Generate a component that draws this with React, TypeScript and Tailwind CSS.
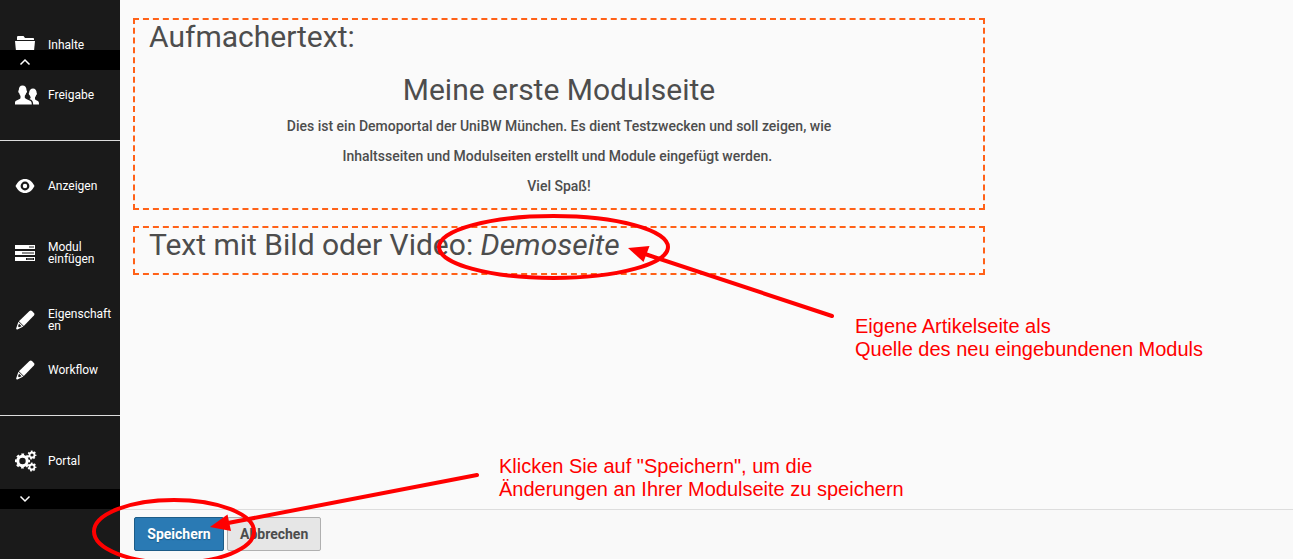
import type { ReactNode } from "react";

function FolderIcon() {
  return (
    <svg width="24" height="20" viewBox="0 0 24 20" fill="currentColor" aria-hidden="true">
      <path d="M2 5V2.2C2 1.4 2.6 1 3.2 1h5.3L10 3h8.2c.5 0 .8.3.8.8V5z" />
      <path d="M0 6h20l-1.2 12H1.2z" />
    </svg>
  );
}

function UsersIcon() {
  return (
    <svg width="24" height="20" viewBox="0 0 24 20" fill="currentColor" aria-hidden="true">
      <path d="M7.5.5c2.600 0 4 2 4 4.600 0 .6.7.7.5 1.700-.2.9-.6 1.100-.8 1.300-.3 1.300-1 2.200-1.400 2.700v1.700c0 .8.6 1 1.500 1.400l3.700 1.800c1.300.7 1.700 1.300 1.800 3.800H0v-2c.1-1.100.6-1.500 1.600-2l3-1.400c.7-.4.9-.7.9-1.600v-1.600c-.5-.6-1.100-1.500-1.400-2.800-.4-.2-.7-.5-.8-1.300-.1-.9.3-1.200.5-1.700 0-2.700 1.200-4.600 3.700-4.600z" />
      <path d="M18 3.500c2.200 0 3.600 1.700 3.600 4 0 .5.5.7.3 1.500-.1.600-.4.900-.7 1.100-.2 1-.7 1.800-1.200 2.300v1.500c0 .5.3.8.8 1l2 1c.9.500 1.200 1 1.200 3.600h-5.800c-.1-2.700-.7-3.900-2.100-4.700l-1.700-.8c.8-.4 1.200-.7 1.200-1.300v-.8c-.5-.5-.8-1.200-1-1.900-.4-.2-.7-.5-.8-1.100-.1-.7.2-1 .4-1.400 0-2.300 1.500-4 3.800-4z" />
    </svg>
  );
}

function EyeIcon() {
  return (
    <svg width="20" height="20" viewBox="0 0 20 20" aria-hidden="true">
      <path d="M.5 10C2.800 5.500 5.900 3 10 3s7.200 2.500 9.500 7c-2.300 4.500-5.400 7-9.500 7S2.800 14.500.5 10z" fill="currentColor" />
      <circle cx="10" cy="10" r="3.300" fill="currentColor" stroke="#1a1a1a" strokeWidth="2.200" />
    </svg>
  );
}

function ModuleIcon() {
  return (
    <svg width="20" height="18" viewBox="0 0 20 18" aria-hidden="true">
      <path d="M0 1h20v4H0zM0 7h20v4H0zM0 13h20v4H0z" fill="currentColor" />
      <path d="M14 2.500h5v1h-5zM7 8.500h12v1H7zM11 14h8v2h-8z" fill="#1a1a1a" />
      <path d="M15 3h3v1h-3zM12 14.500h6v1h-6z" fill="#888888" />
    </svg>
  );
}

function PencilIcon() {
  return (
    <svg width="20" height="20" viewBox="0 0 20 20" fill="currentColor" aria-hidden="true">
      <path d="M14.500 1c.9-.8 1.700-.7 2.500.1l1.900 2c.7.8.7 1.500 0 2.300L8.800 16.100 3.900 11.300z" />
      <path fillRule="evenodd" d="M3.400 11.700l5 4.900-6 2.800c-.9.300-1.500-.3-1.200-1.100zM4 13.800l-1 2.500 1 1 2.600-1.100z" />
    </svg>
  );
}

function CogsIcon() {
  return (
    <svg width="22" height="22" viewBox="0 0 22 22" fill="none" stroke="currentColor" aria-hidden="true">
      <circle cx="7.500" cy="11" r="4.700" strokeWidth="3" />
      <circle cx="7.500" cy="11" r="6.600" strokeWidth="2" strokeDasharray="2.700 2.484" strokeDashoffset="1.350" />
      <circle cx="17" cy="5" r="2.500" strokeWidth="1.800" />
      <circle cx="17" cy="5" r="3.700" strokeWidth="1.500" strokeDasharray="1.700 1.621" strokeDashoffset=".8" />
      <circle cx="17" cy="17" r="2.500" strokeWidth="1.800" />
      <circle cx="17" cy="17" r="3.700" strokeWidth="1.500" strokeDasharray="1.700 1.621" strokeDashoffset=".8" />
    </svg>
  );
}

function Chevron({ up = false }: { up?: boolean }) {
  return (
    <svg width="12" height="8" viewBox="0 0 12 8" fill="none" stroke="currentColor" strokeWidth="1.500" aria-hidden="true">
      <path d={up ? "M1.500 6.500 6 2l4.500 4.500" : "M1.500 1.500 6 6l4.500-4.500"} />
    </svg>
  );
}

function NavItem({ icon, children }: { icon: ReactNode; children: ReactNode }) {
  return (
    <a href="#" className="flex h-[50px] items-center pl-[15px] text-xs leading-3 text-white">
      <span className="w-[33px] shrink-0">{icon}</span>
      <span className="w-16">{children}</span>
    </a>
  );
}

function ScrollBar({ up = false }: { up?: boolean }) {
  return (
    <button
      type="button"
      aria-label={up ? "Nach oben" : "Nach unten"}
      className={`flex h-5 w-full shrink-0 items-center bg-black pl-[19px] text-white ${up ? "pt-1" : ""}`}
    >
      <Chevron up={up} />
    </button>
  );
}

function Sidebar() {
  return (
    <nav className="flex w-[120px] shrink-0 flex-col bg-[#1a1a1a]">
      <div className="h-[50px] overflow-hidden pt-5">
        <NavItem icon={<FolderIcon />}>Inhalte</NavItem>
      </div>
      <ScrollBar up />
      <div className="border-b border-[#dddddd] pb-5">
        <NavItem icon={<UsersIcon />}>Freigabe</NavItem>
      </div>
      <div className="border-b border-[#dddddd] py-5">
        <NavItem icon={<EyeIcon />}>Anzeigen</NavItem>
        <div className="py-[17px]">
          <NavItem icon={<ModuleIcon />}>Modul einfügen</NavItem>
        </div>
        <NavItem icon={<PencilIcon />}>
          <span className="break-all">Eigenschaften</span>
        </NavItem>
        <NavItem icon={<PencilIcon />}>Workflow</NavItem>
      </div>
      <div className="pt-5 pb-[3px]">
        <NavItem icon={<CogsIcon />}>Portal</NavItem>
      </div>
      <ScrollBar />
    </nav>
  );
}

function Module({ title, children }: { title: ReactNode; children?: ReactNode }) {
  return (
    <section className="max-w-[852px] border-2 border-dashed border-[#ff6118] px-[14px] pb-[7px]">
      <h2 className="pb-1 text-[30px] leading-[34px]">{title}</h2>
      {children}
    </section>
  );
}

function Annotations() {
  return (
    <div className="pointer-events-none absolute inset-0 overflow-hidden font-['Liberation_Sans',sans-serif] text-xl leading-[23px] text-[#ff0000]">
      <svg width="1293" height="559" viewBox="0 0 1293 559" className="max-w-none" aria-hidden="true">
        <g fill="none" stroke="currentColor" strokeWidth="4" strokeLinecap="round">
          <ellipse cx="553.500" cy="247" rx="114.500" ry="31" />
          <ellipse cx="174" cy="531.500" rx="80" ry="31.500" />
          <path d="M645 254 832 316" />
          <path d="M228 523 477 475" />
        </g>
        <g fill="currentColor">
          <path d="M628 248 649.500 246 643.500 262z" />
          <path d="M210 527 227.500 514.500 231 531z" />
        </g>
      </svg>
      <p className="absolute top-[315px] left-[855px] whitespace-nowrap">
        Eigene Artikelseite als
        <br />
        Quelle des neu eingebundenen Moduls
      </p>
      <p className="absolute top-[455px] left-[499px] whitespace-nowrap">
        Klicken Sie auf "Speichern", um die
        <br />
        Änderungen an Ihrer Modulseite zu speichern
      </p>
    </div>
  );
}

export default function App() {
  return (
    <div className="relative flex min-h-screen overflow-hidden bg-[#fafafa] font-[Roboto,sans-serif] text-[#4d4d4d]">
      <Sidebar />
      <div className="flex min-w-0 grow flex-col">
        <main className="flex grow flex-col gap-4 px-[13px] pt-[18px]">
          <Module title="Aufmachertext:">
            <div className="pt-[13px] text-center text-sm leading-[30px] font-medium">
              <h3 className="pb-[3px] text-[30px] leading-[37px] font-normal">Meine erste Modulseite</h3>
              <p>Dies ist ein Demoportal der UniBW München. Es dient Testzwecken und soll zeigen, wie</p>
              <p>Inhaltsseiten und Modulseiten erstellt und Module eingefügt werden.&nbsp;</p>
              <p>Viel Spaß!</p>
            </div>
          </Module>
          <Module
            title={
              <>
                Text mit Bild oder Video: <em>Demoseite</em>
              </>
            }
          />
        </main>
        <footer className="flex gap-[3px] border-t border-[#dddddd] bg-[#f9f9f9] px-[14px] pt-[7px] pb-2 text-sm font-bold">
          <button
            type="button"
            className="h-[34px] min-w-[90px] rounded-[2px] border border-[#1d5c87] bg-[#2a7ab4] px-3 text-white [text-shadow:0_1px_1px_#1d5c87]"
          >
            Speichern
          </button>
          <button
            type="button"
            className="h-[34px] rounded-[2px] border border-[#b0b0b0] bg-[#e6e6e6] px-3 text-[#4d4d4d]"
          >
            Abbrechen
          </button>
        </footer>
      </div>
      <Annotations />
    </div>
  );
}
